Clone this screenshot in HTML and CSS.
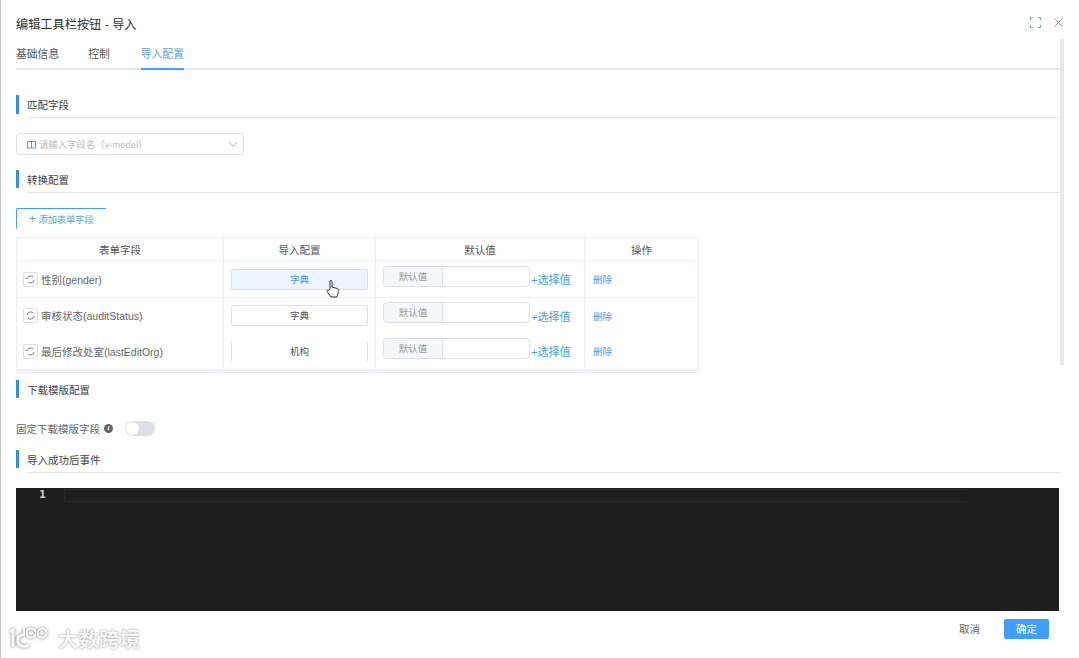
FILE: index.html
```html
<!DOCTYPE html>
<html lang="zh">
<head>
<meta charset="utf-8">
<title>编辑工具栏按钮 - 导入</title>
<link rel="stylesheet" href="styles.css">
</head>
<body>
<div class="dialog">
  <header class="head">
    <h1 class="title">编辑工具栏按钮 - 导入</h1>
    <div class="head-icons">
      <svg class="ico-full" width="11" height="11" viewBox="0 0 11 11" fill="none" stroke="#5aa5e6" stroke-width="1"><path d="M.5 3V.5H3M8 .5h2.500V3M10.500 8v2.500H8M3 10.500H.5V8"/></svg>
      <svg class="ico-x" width="9" height="9" viewBox="0 0 9 9" fill="none" stroke="#999" stroke-width="1"><path d="M.5.5l8 8M8.500.5l-8 8"/></svg>
    </div>
  </header>
  <div class="main">
    <div class="content">
      <nav class="tabs">
        <span class="tab">基础信息</span>
        <span class="tab">控制</span>
        <span class="tab active">导入配置</span>
      </nav>

      <div class="sec first"><span class="sec-t">匹配字段</span></div>
      <div class="select">
        <svg width="9" height="9" viewBox="0 0 9 9" fill="none" stroke="#4a9ee6"><rect x=".5" y="1.500" width="8" height="6.500"/><path d="M4.500 2v6"/></svg>
        <span class="ph">请输入字段名（v-model）</span>
        <svg class="chev" width="10" height="6" viewBox="0 0 10 6" fill="none" stroke="#b5b8bf"><path d="M1 1l4 4 4-4"/></svg>
      </div>

      <div class="sec second"><span class="sec-t">转换配置</span></div>
      <div class="add"><span class="plus">+</span> 添加表单字段</div>

      <div class="table">
        <div class="row hd">
          <div class="c c1">表单字段</div><div class="c c2">导入配置</div><div class="c c3 center">默认值</div><div class="c c4">操作</div>
        </div>
        <div class="row r1 line">
          <div class="c c1 f"><span class="hnd"><svg width="9" height="9" viewBox="0 0 9 9" fill="none" stroke="#777"><path d="M1 4a3.500 3.500 0 0 1 6-2M8 5a3.500 3.500 0 0 1-6 2"/></svg></span>性别(gender)</div>
          <div class="c c2"><span class="btn hover">字典</span></div>
          <div class="c c3"><span class="ig"><span class="ig-l">默认值</span><span class="ig-i"></span></span><span class="link sel">+选择值</span></div>
          <div class="c c4 l"><span class="link">删除</span></div>
        </div>
        <div class="row r2">
          <div class="c c1 f"><span class="hnd"><svg width="9" height="9" viewBox="0 0 9 9" fill="none" stroke="#777"><path d="M1 4a3.500 3.500 0 0 1 6-2M8 5a3.500 3.500 0 0 1-6 2"/></svg></span>审核状态(auditStatus)</div>
          <div class="c c2"><span class="btn">字典</span></div>
          <div class="c c3"><span class="ig"><span class="ig-l">默认值</span><span class="ig-i"></span></span><span class="link sel">+选择值</span></div>
          <div class="c c4 l"><span class="link">删除</span></div>
        </div>
        <div class="row r3">
          <div class="c c1 f"><span class="hnd"><svg width="9" height="9" viewBox="0 0 9 9" fill="none" stroke="#777"><path d="M1 4a3.500 3.500 0 0 1 6-2M8 5a3.500 3.500 0 0 1-6 2"/></svg></span>最后修改处室(lastEditOrg)</div>
          <div class="c c2"><span class="btn sides">机构</span></div>
          <div class="c c3"><span class="ig"><span class="ig-l">默认值</span><span class="ig-i"></span></span><span class="link sel">+选择值</span></div>
          <div class="c c4 l"><span class="link">删除</span></div>
        </div>
      </div>
      <div class="tail"></div>

      <div class="sec third"><span class="sec-t">下载模版配置</span></div>
      <div class="form-row">
        <span class="lbl">固定下载模版字段</span>
        <span class="info">i</span>
        <span class="switch"><span class="knob"></span></span>
      </div>
      <div class="sec fourth"><span class="sec-t">导入成功后事件</span></div>
      <div class="editor">
        <div class="gutter">1</div>
        <div class="cur-line"></div>
      </div>
    </div>
    <div class="scroll"></div>
  </div>
  <footer class="foot">
    <div class="brand">
      <svg class="brand-logo" width="40" height="24" viewBox="0 0 40 24" fill="none" stroke="#f8f8f8" stroke-width="3"><path d="M1 6l3-2v17M16 9c-5-1-8 2-7 7 1 4 6 6 11 3"/><path d="M15 2v8" stroke-width="2"/><circle cx="22" cy="7" r="4.500" stroke-width="2"/><circle cx="33" cy="7" r="4.500" stroke-width="2"/></svg>
      <span class="brand-t">大数跨境</span>
    </div>
    <div class="actions">
      <span class="cancel">取消</span>
      <span class="ok">确定</span>
    </div>
  </footer>
  <svg class="cursor" width="16" height="20" viewBox="0 0 16 20" fill="#fff" stroke="#333" stroke-width="1"><path d="M5 10V2.500a1 1 0 0 1 2 0V8l5 1.500c1.500.5 2 1.500 1.500 3L12 18H6L2 12.500c-.5-1 .8-2 1.500-1.200z"/></svg>
</div>
</body>
</html>
```
FILE: styles.css
```css
* { box-sizing: border-box; }
html, body { margin: 0; height: 100%; overflow: hidden; background: #fff; }
body { font-family: "Liberation Sans", "Noto Sans CJK SC", sans-serif; color: #555; font-size: 11px; }
.dialog { position: relative; width: 1079px; height: 658px; border-left: 1px solid #c4c4c4; display: flex; flex-direction: column; }
.head { height: 39px; padding: 17px 16px 0 15px; display: flex; justify-content: space-between; align-items: flex-start; }
.title { margin: 0; font-size: 12.200px; font-weight: 400; line-height: 17px; color: #333; }
.head-icons { display: flex; align-items: center; gap: 13px; padding-top: 0; }
.main { display: flex; height: 572px; padding-left: 15px; }
.content { width: 1044px; }
.tabs { display: flex; height: 31px; border-bottom: 2px solid #e4e7ed; gap: 29px; width: 1044px; }
.tab { height: 31px; padding-top: 2px; line-height: 27px; font-size: 10.800px; color: #555; border-bottom: 2px solid transparent; margin-bottom: -2px; white-space: nowrap; }
.tab.active { margin-left: 2px; color: #5a9fdc; border-bottom-color: #409eff; }
.sec { position: relative; height: 23px; padding-left: 11px; line-height: 20px; border-bottom: 1px solid #e3e5ea; }
.sec::before { content: ""; position: absolute; left: 0; top: 0; width: 3px; height: 18px; background: #2f8fe8; }
.sec-t { font-size: 10.500px; color: #444; }
.sec::after { content: ""; position: absolute; left: 0; bottom: -1px; width: 12px; height: 1px; background: #fff; }
.sec.first { margin-top: 25px; }
.sec.first::before { height: 19px; }
.sec.second { margin-top: 15px; }
.sec.third { margin-top: 7px; border-bottom: 0; height: 19px; }
.sec.fourth { margin-top: 14px; }
.select { margin-top: 15px; width: 228px; height: 22px; border: 1px solid #dcdfe6; border-radius: 4px; display: flex; align-items: center; padding: 0 5px 0 10px; }
.ph { margin-left: 3px; font-size: 9.400px; color: #bbb; flex: 1; white-space: nowrap; }
.add { margin-top: 15px; width: 90px; height: 21px; border-top: 1px solid #409eff; border-left: 1px solid #409eff; border-radius: 2px 0 0 2px; color: #5aa2e2; font-size: 9.200px; line-height: 20px; padding-left: 12px; white-space: nowrap; }
.plus { font-size: 12px; margin-right: 0; }
.table { margin-top: 8px; width: 683px; border: 1px solid #ebeef5; border-bottom: 2px solid #ebeef5; }
.row { display: flex; }
.c { display: flex; align-items: center; justify-content: center; border-right: 1px solid #ebeef5; }
.c1 { width: 207px; }
.c2 { width: 152px; }
.c3 { width: 209px; justify-content: flex-start; padding-left: 7px; }
.c3.center { justify-content: center; padding-left: 0; }
.c4 { width: 113px; border-right: 0; }
.hd { height: 23px; font-size: 10.500px; color: #555; border-bottom: 1px solid #ebeef5; }
.r1 { height: 37px; border-bottom: 1px solid #ebeef5; }
.r2 { height: 35px; }
.r3 { height: 36px; }
.f { justify-content: flex-start; padding-left: 6px; font-size: 10.500px; color: #666; white-space: nowrap; }
.l { justify-content: flex-start; padding-left: 8px; }
.hnd { width: 15px; height: 15px; border: 1px solid #dcdfe6; border-radius: 2px; margin-right: 3px; display: flex; align-items: center; justify-content: center; }
.btn { width: 137px; height: 21px; border: 1px solid #dcdfe6; border-radius: 2px; text-align: center; line-height: 19px; font-size: 9.500px; color: #555; }
.btn.hover { background: #ecf5ff; border-color: #c6e2ff; color: #409eff; }
.btn.sides { border-top-color: transparent; border-bottom-color: transparent; }
.ig { display: flex; width: 147px; height: 21px; margin-top: -6px; border: 1px solid #dcdfe6; border-radius: 4px; }
.ig-l { width: 59px; background: #f5f7fa; border-right: 1px solid #dcdfe6; border-radius: 4px 0 0 4px; text-align: center; line-height: 19px; font-size: 9.500px; color: #999; }
.ig-i { flex: 1; }
.link { color: #4a9ee6; font-size: 9.500px; white-space: nowrap; }
.sel { margin-left: 1px; font-size: 11px; }
.tail { width: 683px; height: 1px; margin-top: 1px; background: #ebeef5; }
.form-row { display: flex; align-items: center; height: 16px; margin-top: 21px; font-size: 10.500px; color: #666; }
.info { width: 9px; height: 9px; margin-left: 4px; border-radius: 50%; background: #666; color: #fff; font: italic bold 7px/9px "Liberation Serif", serif; text-align: center; }
.switch { width: 30px; height: 15px; margin-left: 12px; background: #dcdfe6; border-radius: 8px; padding: 1px; }
.knob { display: block; width: 13px; height: 13px; background: #fff; border-radius: 50%; }
.editor { position: relative; margin-top: 15px; width: 1043px; height: 123px; background: #1e1e1e; }
.gutter { position: absolute; left: 23px; top: 0; width: 8px; font: bold 10px/14px "DejaVu Sans", sans-serif; color: #c6c6c6; }
.cur-line { position: absolute; left: 48px; top: 1px; width: 902px; height: 13px; border: 1px solid #282828; border-right: 0; }
.scroll { width: 4px; height: 326px; background: #e6e7ea; }
.foot { flex: 1; position: relative; display: flex; justify-content: space-between; }
.brand { display: flex; align-items: center; gap: 9px; padding-left: 8px; height: 24px; margin-top: 15px; }
.brand-logo { filter: drop-shadow(0 0 1.500px #777); }
.brand-t { font-size: 20.500px; color: #f6f6f6; font-weight: 700; text-shadow: 0 0 2px #888; white-space: nowrap; }
.actions { display: flex; gap: 12px; padding: 8px 30px 0 0; }
.cancel, .ok { height: 20px; text-align: center; line-height: 20px; font-size: 10.500px; border-radius: 2px; }
.cancel { width: 47px; padding-left: 2px; color: #666; }
.ok { width: 45px; background: #409eff; color: #fff; }
.cursor { position: absolute; left: 324px; top: 279px; }
```
